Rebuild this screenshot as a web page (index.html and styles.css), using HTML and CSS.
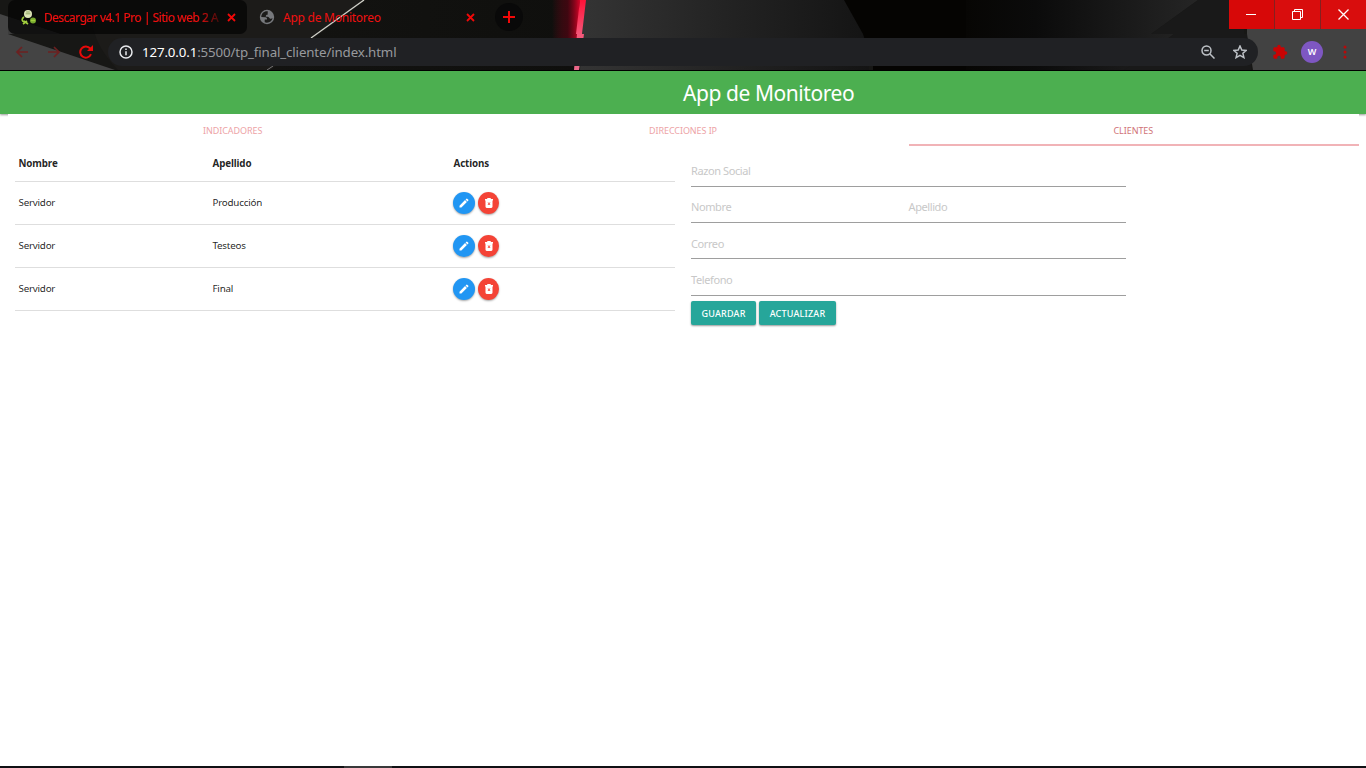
FILE: index.html
```html
<!DOCTYPE html>
<html lang="es">
<head>
<meta charset="utf-8">
<title>App de Monitoreo</title>
<link rel="stylesheet" href="styles.css">
</head>
<body>
<div class="browser">
  <svg class="theme" viewBox="0 0 1366 70" width="1366" height="70" aria-hidden="true">
    <defs>
      <linearGradient id="g1"><stop offset="0" stop-color="#343434"/><stop offset=".5" stop-color="#232323"/><stop offset="1" stop-color="#141414"/></linearGradient>
      <linearGradient id="g2"><stop offset="0" stop-color="#070604"/><stop offset=".3" stop-color="#0b0b0b"/><stop offset="1" stop-color="#252525"/></linearGradient>
      <linearGradient id="g3"><stop offset="0" stop-color="#a0001a" stop-opacity="0"/><stop offset=".55" stop-color="#6c0014" stop-opacity=".5"/><stop offset="1" stop-color="#d80428"/></linearGradient>
      <linearGradient id="g4" x2="0" y2="1"><stop offset="0" stop-color="#ff1238"/><stop offset=".5" stop-color="#f4587a"/><stop offset="1" stop-color="#e8688a"/></linearGradient>
      <linearGradient id="g5"><stop offset="0" stop-color="#131311"/><stop offset="1" stop-color="#0f0f0d"/></linearGradient>
    </defs>
    <path fill="#171715" d="M0 0h1366v70H0z"/>
    <path fill="#1c1b19" d="M90 0h276L270 70H118Q88 40 90 0z"/>
    <path fill="url(#g5)" d="M366 0h214l-4 70H270z"/>
    <path fill="#444" d="M0 14l60 20H0zM0 34h8l107 36H0z"/>
    <path fill="#3c3c3c" d="M8 17l52 17H8z"/>
    <path stroke="#d0d0c8" stroke-width="1.3" d="M364 0L311 38"/>
    <path stroke="#777" d="M273 66l-6 4"/>
    <path fill="url(#g3)" d="M552 0h28l-3 38h-25z"/>
    <path fill="url(#g1)" d="M584 0h262l23 38v32H580z"/>
    <path fill="url(#g4)" d="M580 0h6l-4 34h2l-5 36h-5l3-36h-1z"/>
    <path fill="#050402" d="M844 0h122v70h-93v-4l-10-32z"/>
    <path fill="url(#g2)" d="M966 0h232l-47 34h23l-50 36H966z"/>
    <path fill="#191919" d="M1198 0h46v34h7v36h-127l50-36h-23z"/>
    <path fill="#424242" d="M1247 0h119v70h-113l-6-36z"/>
  </svg>
  <div class="tabs-row">
    <div class="browser-tab first">
      <svg class="favicon" viewBox="0 0 16 16"><circle cx="7" cy="5" r="4" fill="#dce5b7"/><path d="M4.6 4.800h4.800M5.200 3h3.600" stroke="#91a564"/><circle cx="12" cy="11.500" r="3" fill="#76a82e"/><path d="M3 8C0 10 1 13 4 12.500M3 12l4 3M2 15l4-3M10 11.500h4" stroke="#a1ce3d" stroke-width="1.600" fill="none"/></svg>
      <span class="tab-label fade">Descargar v4.1 Pro | Sitio web 2 A</span>
      <svg class="close" viewBox="0 0 9 9"><path d="M1 1l7 7M8 1L1 8"/></svg>
    </div>
    <div class="browser-tab second">
      <svg class="globe" viewBox="0 0 16 16"><circle cx="8" cy="8" r="7.200" fill="#77797d"/><path fill="#1b1b1a" d="M8.500 2.300C5 2 2.300 4.500 2.300 8l4.200.200c1.200.100 1.700 1 1.500 2.300H5.700v2.800c3.500 1.300 7.200-.8 7.900-4.300-1 1-2.300 1-3 .2C10 8.300 9.800 7.800 8.500 7.700H6.800c0-1.500.6-2 2-2.200 0-1.200-.5-2 .2-2.500z"/></svg>
      <span class="tab-label">App de Monitoreo</span>
      <svg class="close" viewBox="0 0 9 9"><path d="M1 1l7 7M8 1L1 8"/></svg>
    </div>
    <div class="new-tab"><svg viewBox="0 0 12 12" width="12" height="12"><path d="M6 0v12M0 6h12" stroke="#f20808" stroke-width="2"/></svg></div>
    <div class="window-controls">
      <div><svg viewBox="0 0 11 11"><path d="M0 5.500h10"/></svg></div>
      <div><svg viewBox="0 0 11 11"><path d="M.5 2.500h8v8h-8zM2.500 2.500v-2h8v8h-2"/></svg></div>
      <div><svg viewBox="0 0 11 11"><path d="M.5.5l10 10M10.500.5l-10 10" stroke-width="1.300"/></svg></div>
    </div>
  </div>
  <div class="toolbar">
    <div class="nav-icons">
      <svg class="dim" viewBox="0 0 14 14"><path d="M13 7H2M7 2L2 7l5 5"/></svg>
      <svg class="dim" viewBox="0 0 14 14"><path d="M1 7h11M7 2l5 5-5 5"/></svg>
      <svg class="reload" viewBox="0 0 14 14"><path d="M12 9.200A5.600 5.600 0 1 1 11.200 3.500"/><path class="solid" d="M14 0v6H8z"/></svg>
    </div>
    <div class="address">
      <svg class="info" viewBox="0 0 14 14"><circle cx="7" cy="7" r="6"/><path d="M7 6.200v4M7 3.500v1.500"/></svg>
      <span class="url"><b>127.0.0.1</b>:5500/tp_final_cliente/index.html</span>
      <svg class="magnifier" viewBox="0 0 14 14"><circle cx="5.500" cy="5.500" r="4.500"/><path d="M9 9l4.500 4.500M3.200 5.500h4.600"/></svg>
      <svg class="star" viewBox="0 0 14 14"><path d="M7 1l1.800 4 4.400.400-3.300 2.900 1 4.300L7 10.300l-3.900 2.300 1-4.300L.8 5.400 5.200 5z"/></svg>
    </div>
    <svg class="puzzle" viewBox="0 0 24 24"><path d="M20.500 11H19V7c0-1.100-.9-2-2-2h-4V3.500a2.500 2.500 0 0 0-5 0V5H4c-1.100 0-2 .9-2 2v3.800h1.500a2.700 2.700 0 0 1 0 5.400H2V20c0 1.100.9 2 2 2h3.800v-1.500a2.700 2.700 0 0 1 5.400 0V22H17c1.100 0 2-.9 2-2v-4h1.500a2.500 2.500 0 0 0 0-5z"/></svg>
    <div class="avatar">W</div>
    <svg class="menu" viewBox="0 0 4 14"><circle cx="2" cy="2" r="1.500"/><circle cx="2" cy="7" r="1.500"/><circle cx="2" cy="12" r="1.500"/></svg>
  </div>
</div>

<div class="page">
  <nav class="app-bar"><h1>App de Monitoreo</h1></nav>
  <main>
    <div class="tabs">
      <a>INDICADORES</a>
      <a>DIRECCIONES IP</a>
      <a class="active">CLIENTES</a>
    </div>
    <div class="columns">
      <table>
        <thead><tr><th class="c1">Nombre</th><th class="c2">Apellido</th><th>Actions</th></tr></thead>
        <tbody>
          <tr><td>Servidor</td><td>Producción</td><td class="action-cell"><div class="actions"><i class="edit"><svg viewBox="0 0 24 24"><use href="#pencil"/></svg></i><i class="delete"><svg viewBox="0 0 24 24"><use href="#trash"/></svg></i></div></td></tr>
          <tr><td>Servidor</td><td>Testeos</td><td class="action-cell"><div class="actions"><i class="edit"><svg viewBox="0 0 24 24"><use href="#pencil"/></svg></i><i class="delete"><svg viewBox="0 0 24 24"><use href="#trash"/></svg></i></div></td></tr>
          <tr><td>Servidor</td><td>Final</td><td class="action-cell"><div class="actions"><i class="edit"><svg viewBox="0 0 24 24"><use href="#pencil"/></svg></i><i class="delete"><svg viewBox="0 0 24 24"><use href="#trash"/></svg></i></div></td></tr>
        </tbody>
      </table>
      <form>
        <div class="field">Razon Social</div>
        <div class="field pair"><span>Nombre</span><span>Apellido</span></div>
        <div class="field email">Correo</div>
        <div class="field phone">Telefono</div>
        <div class="buttons"><button type="button" class="save">GUARDAR</button><button type="button" class="update">ACTUALIZAR</button></div>
      </form>
    </div>
  </main>
</div>
<div class="taskbar"><div></div></div>

<svg class="symbols" width="0" height="0">
  <symbol id="pencil" viewBox="0 0 24 24"><path d="M3 17.250V21h3.750L17.810 9.940l-3.750-3.750L3 17.250zM20.710 7.040a1 1 0 0 0 0-1.410l-2.340-2.340a1 1 0 0 0-1.410 0l-1.830 1.830 3.750 3.750 1.830-1.830z"/></symbol>
  <symbol id="trash" viewBox="0 0 24 24"><path fill-rule="evenodd" d="M4 4h4l1-2h6l1 2h4v3H4zM5 7h14v12c0 1.500-1 3-2.500 3h-9C6 22 5 20.500 5 19zM9 11l2 2.500L9 16h1.500l1.500-1 1.500 1H15l-2-2.500 2-2.500h-1.500L12 12l-1.500-1z"/></symbol>
</svg>
</body>
</html>
```
FILE: styles.css
```css
* { box-sizing: border-box; }
body {
  margin: 0;
  height: 768px;
  overflow: hidden;
  display: flex;
  flex-direction: column;
  background: #fff;
  color: rgba(0, 0, 0, .87);
  font-family: "Noto Sans", "Open Sans", sans-serif;
  font-size: 10px;
}
svg { display: block; flex: none; }
.symbols { position: absolute; }

/* browser frame */
.browser { position: relative; height: 71px; border-bottom: 1px solid #000; flex: none; }
.theme { position: absolute; left: 0; top: 0; }
.tabs-row, .toolbar { position: relative; display: flex; }
.tabs-row { height: 38px; }
.browser-tab { display: flex; align-items: center; height: 34px; }
.first { width: 239px; margin-left: 8px; padding: 0 11px 0 13px; border-radius: 7px; background: rgba(5, 5, 5, .78); }
.second { width: 241px; padding: 0 13px 0 12px; }
.favicon { width: 16px; height: 16px; margin-right: 7px; }
.globe { width: 16px; height: 16px; margin-right: 8px; }
.tab-label { flex: 1; white-space: nowrap; color: #f01010; font-size: 12px; letter-spacing: -.25px; }
.fade { letter-spacing: -.49px; -webkit-text-stroke: .2px #f01010; -webkit-mask-image: linear-gradient(90deg, #000 84%, transparent 100%); mask-image: linear-gradient(90deg, #000 84%, transparent 100%); }
.close { width: 9px; height: 9px; stroke: #f20808; stroke-width: 1.8; fill: none; }
.new-tab { display: flex; align-items: center; justify-content: center; width: 28px; height: 28px; margin: 3px 0 0 7px; border-radius: 50%; background: #090909; }
.window-controls { display: flex; gap: 1px; height: 29px; margin-left: auto; background: #842020; }
.window-controls div { display: flex; align-items: center; justify-content: center; width: 45px; background: #d90d0d; }
.window-controls div:first-child { background: #d70808; }
.window-controls svg { width: 11px; height: 11px; stroke: #fff; fill: none; }
.toolbar { height: 28px; align-items: center; }
.nav-icons { display: flex; gap: 18px; width: 108px; padding-left: 15px; }
.nav-icons svg { width: 14px; height: 14px; stroke: #e80909; stroke-width: 2; fill: none; }
.nav-icons .dim { stroke: #6c2020; stroke-width: 1.7; }
.nav-icons .solid { fill: #e80909; stroke: none; }
.address { display: flex; align-items: center; width: 1150px; height: 28px; padding: 0 11px; border-radius: 14px; background: #202124; }
.address svg { width: 14px; height: 14px; fill: none; stroke: #bdc1c6; stroke-width: 1.5; }
.address .info { stroke: #e8eaed; }
.url { flex: 1; margin-left: 9px; color: #989a9e; font-size: 13.3px; letter-spacing: -.13px; }
.url b { color: #fff; font-weight: 400; }
.magnifier { margin-right: 18px; }
.puzzle { width: 16px; height: 16px; margin-left: 14px; fill: #c90303; }
.avatar { width: 22px; height: 22px; margin-left: 13px; border-radius: 50%; background: #7e57c2; color: #fff; font-size: 9px; font-weight: 600; line-height: 22px; text-align: center; }
.menu { width: 4px; height: 14px; margin-left: 20px; fill: #b70a0a; }

/* application */
.page { flex: 1; }
.app-bar { height: 43px; background: #4caf50; box-shadow: 0 1px 2px rgba(0, 0, 0, .4); }
h1 { margin: 0; padding-left: 683px; color: #fff; font-size: 21px; font-weight: 400; line-height: 45px; letter-spacing: -.43px; }
main { position: relative; margin: 0 7px 0 8px; background: #fff; }
.tabs { display: grid; grid-template-columns: repeat(3, 1fr); height: 32px; }
.tabs a { height: 32px; padding-right: 1px; color: #eda3a6; font-size: 9px; line-height: 34px; letter-spacing: -.08px; text-align: center; }
.tabs .active { color: #d07377; border-bottom: 2px solid #f1b3b7; }
.columns { display: flex; align-items: flex-start; padding-left: 7px; }
table { width: 660px; table-layout: fixed; border-collapse: collapse; }
th, td { height: 43px; padding: 0 3.5px; text-align: left; font-size: 9.8px; letter-spacing: -.22px; border-bottom: 1px solid #dedede; }
th { height: 35px; padding-top: 1px; letter-spacing: -.12px; }
.c1 { width: 194px; }
.c2 { width: 241px; }
.action-cell { padding-left: 3px; }
.actions { display: flex; gap: 3px; }
.actions i { display: flex; align-items: center; justify-content: center; width: 22px; height: 22px; border-radius: 50%; box-shadow: 0 1px 2px rgba(0, 0, 0, .35); }
.actions svg { width: 12px; height: 12px; fill: #fff; }
.actions .edit { background: #2196f3; }
.actions .delete { width: 21px; background: #f44336; }
form { width: 435px; margin-left: 16px; padding-top: 5px; }
.field { height: 36px; padding-top: 1px; border-bottom: 1px solid #9e9e9e; color: #c8c8c8; font-size: 11px; line-height: 38px; letter-spacing: -.4px; }
.email { padding-top: 2px; }
.phone { height: 37px; padding-top: 2px; }
.pair { display: grid; grid-template-columns: 1fr 1fr; }
.buttons { display: flex; gap: 3px; margin-top: 5px; }
button { height: 24px; padding: 1px 0 0; border: 0; border-radius: 2px; background: #26a69a; box-shadow: 0 1px 2px rgba(0, 0, 0, .4); color: #fff; font: 500 9px "Noto Sans", sans-serif; letter-spacing: .2px; }
.save { width: 65px; }
.update { width: 77px; }
.taskbar { height: 2px; padding-left: 344px; background: #101114; }
.taskbar div { width: 48px; height: 2px; background: #39393a; }
```
